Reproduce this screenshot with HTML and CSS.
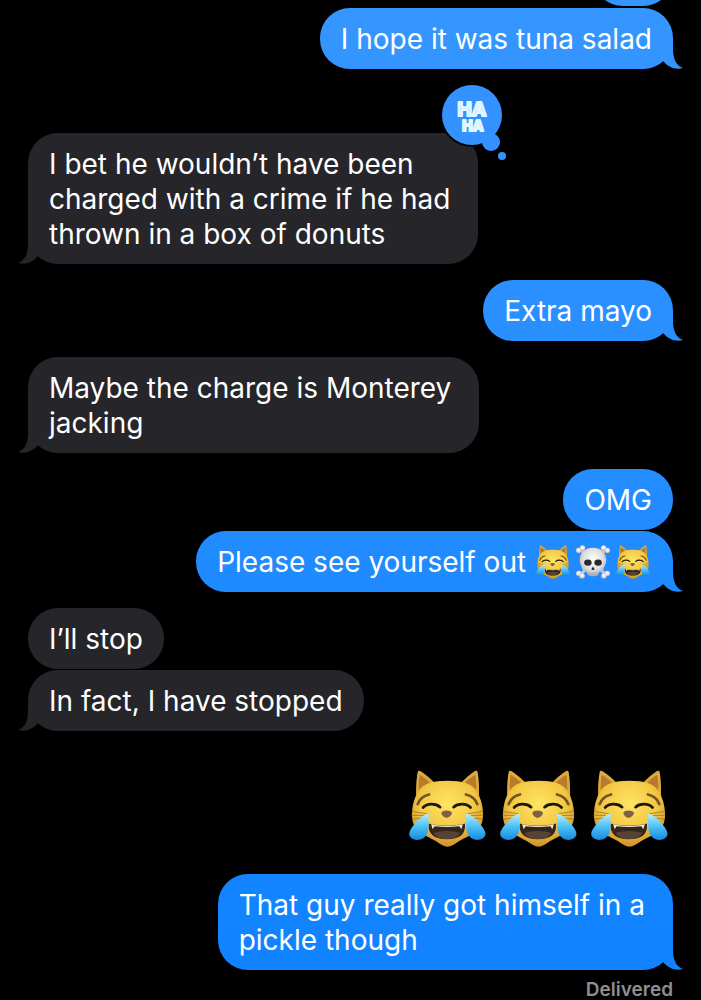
FILE: index.html
```
<!DOCTYPE html>
<html lang="en">
<head>
  <meta charset="UTF-8" />
  <meta name="viewport" content="width=device-width, initial-scale=1.0" />
  <title>Messages</title>
  <link rel="stylesheet" href="styles.css">
</head>
<body>
  <!-- emoji shapes, reused below -->
  <svg class="sprites" aria-hidden="true">
    <defs>
      <radialGradient id="fur" cx="0.5" cy="0.35" r="0.65">
        <stop offset="0" stop-color="#ffe565" />
        <stop offset="0.6" stop-color="#f3c843" />
        <stop offset="1" stop-color="#cf8f2a" />
      </radialGradient>
      <linearGradient id="tear" x1="0" y1="0" x2="0" y2="1">
        <stop offset="0" stop-color="#b9efff" />
        <stop offset="0.5" stop-color="#4cc0f5" />
        <stop offset="1" stop-color="#1689de" />
      </linearGradient>
      <radialGradient id="bone" cx="0.5" cy="0.4" r="0.6">
        <stop offset="0" stop-color="#ffffff" />
        <stop offset="0.65" stop-color="#dcdcdf" />
        <stop offset="1" stop-color="#a9a9b0" />
      </radialGradient>
      <linearGradient id="puff" x1="0" y1="0" x2="0" y2="1">
        <stop offset="0" stop-color="#ffffff" />
        <stop offset="0.5" stop-color="#bfeaff" />
        <stop offset="1" stop-color="#ffffff" />
      </linearGradient>
    </defs>

    <symbol id="cat" viewBox="30 32 230 230">
      <path d="M52 120C50 90 52 60 56 38c1-4 5-5 9-2 16 11 29 22 42 35l78 0c13-13 25-24 41-35 4-3 8-2 9 2 4 22 5 52 4 82z" fill="#deaa3b" />
      <path d="M60 104c-2-22-1-42 2-58 13 8 25 17 34 28zM230 104c2-22 1-42-2-58-13 8-25 17-34 28z" fill="#b67b2c" />
      <path d="M145 64c43 0 74 8 88 32 12 20 17 42 18 62 1 16-1 32-9 44-14 22-42 30-63 43-12 8-23 16-34 16s-22-8-34-16c-21-13-49-21-63-43-8-12-10-28-9-44 1-20 6-42 18-62 14-24 45-32 88-32z" fill="url(#fur)" />
      <g fill="none" stroke="#715522" stroke-width="8" stroke-linecap="round">
        <path d="M56 134c5-15 17-25 34-29M234 134c-5-15-17-25-34-29" />
      </g>
      <g fill="none" stroke="#20170c" stroke-width="8" stroke-linecap="round">
        <path d="M72 144c12-13 38-13 51-1M163 143c13-12 39-12 51 1" />
      </g>
      <g fill="none" stroke="#8a6425" stroke-width="2" stroke-linecap="round">
        <path d="M40 156l46 7M38 167l44 1M40 179l36-5M249 156l-46 7M251 167l-44 1M249 179l-36-5" />
      </g>
      <path d="M89 192c25 8 81 8 108 0 4 32-16 47-54 47s-58-16-54-47z" fill="#35261c" />
      <path d="M103 220c20-8 60-8 80 0-8 13-21 18-40 18s-32-5-40-18z" fill="#574334" />
      <path d="M96 194c30 6 64 6 95 0l-5 15-5-9c-25 3-50 3-75 0l-5 9z" fill="#f2ece2" />
      <path d="M127 159c3-8 27-8 31 0 2 6-9 16-16 16s-17-10-15-16z" fill="#806049" />
      <path d="M89 162c-10-1-28 15-42 31-17 19-22 33-9 43 16 10 39 4 47-15 6-16 3-35 4-59z" fill="url(#tear)" />
      <path d="M200 162c10-1 29 15 42 31 17 19 22 33 9 43-16 10-38 4-46-15-6-16-4-35-5-59z" fill="url(#tear)" />
    </symbol>

    <symbol id="skull" viewBox="0 0 100 100">
      <g stroke="#c9c9ce" stroke-width="9" stroke-linecap="round">
        <path d="M15 15L86 86M85 15L14 86" />
      </g>
      <g fill="url(#bone)">
        <circle cx="8" cy="16" r="8" /><circle cx="19" cy="9" r="8" />
        <circle cx="92" cy="16" r="8" /><circle cx="81" cy="9" r="8" />
        <circle cx="8" cy="84" r="8" /><circle cx="18" cy="91" r="8" />
        <circle cx="92" cy="84" r="8" /><circle cx="82" cy="91" r="8" />
        <path d="M50 8c26 0 39 16 39 36 0 13-6 18-7 26-1 7-11 8-14 10-2 9-7 12-18 12s-16-3-18-12c-3-2-13-3-14-10-1-8-7-13-7-26C11 24 24 8 50 8z" />
      </g>
      <ellipse cx="35" cy="52" rx="11" ry="9" fill="#29292c" />
      <ellipse cx="65" cy="52" rx="11" ry="9" fill="#29292c" />
      <path d="M50 63l5 9q-5 3-10 0z" fill="#29292c" />
      <path d="M41 80v7M47 81v8M53 81v8M59 80v7" stroke="#a0a0a6" stroke-width="2" />
    </symbol>
  </svg>

  <main class="thread">
    <div class="group sent">
      <div class="bubble cut"></div>
      <div class="bubble tail">I hope it was tuna salad</div>
    </div>

    <div class="group received reacted">
      <div class="bubble multiline tail">I bet he wouldn’t have been<br>charged with a crime if he had<br>thrown in a box of donuts
        <svg class="reaction" viewBox="0 0 66 76" role="img" aria-label="Ha ha">
          <circle cx="30" cy="30" r="32" fill="#000" />
          <g fill="#3392ff">
            <circle cx="30" cy="30" r="30" />
            <circle cx="49" cy="57" r="9" />
            <circle cx="60" cy="71" r="4" />
          </g>
          <text class="ha" x="30" y="31">HA</text>
          <text class="ha ha-small" x="31" y="46">HA</text>
        </svg>
      </div>
    </div>

    <div class="group sent">
      <div class="bubble tail">Extra mayo</div>
    </div>

    <div class="group received">
      <div class="bubble multiline tail">Maybe the charge is Monterey<br>jacking</div>
    </div>

    <div class="group sent">
      <div class="bubble">OMG</div>
      <div class="bubble tail">Please see yourself out
        <span class="emojis" role="img" aria-label="laughing cat, skull, laughing cat">
          <svg><use href="#cat" /></svg>
          <svg><use href="#skull" /></svg>
          <svg><use href="#cat" /></svg>
        </span>
      </div>
    </div>

    <div class="group received">
      <div class="bubble">I’ll stop</div>
      <div class="bubble tail">In fact, I have stopped</div>
    </div>

    <div class="big-emojis" role="img" aria-label="three laughing cats">
      <svg><use href="#cat" /></svg>
      <svg><use href="#cat" /></svg>
      <svg><use href="#cat" /></svg>
    </div>

    <div class="group sent">
      <div class="bubble multiline tail">That guy really got himself in a<br>pickle though</div>
    </div>
    <div class="status">Delivered</div>
  </main>
</body>
</html>
```

FILE: styles.css
```
* {
  box-sizing: border-box;
  margin: 0;
  padding: 0;
}

body {
  background: #000;
  color: #fff;
  font-family: Inter, 'Liberation Sans', sans-serif;
  font-size: 28px;
  line-height: 35px;
  overflow: hidden;
}

.sprites {
  position: absolute;
  width: 0;
  height: 0;
}

.thread {
  display: flex;
  flex-direction: column;
  gap: 16px;
  padding: 0 28px;
}

.group {
  display: flex;
  flex-direction: column;
  align-items: flex-start;
  gap: 1px;
}

.sent {
  align-items: flex-end;
}

.reacted {
  margin-top: 48px;
}

.bubble {
  position: relative;
  padding: 14px 21px 12px;
  border-radius: 30px;
  background: #26252a;
}

.multiline {
  padding-right: 28px;
}

.sent .bubble,
.sent .tail::after {
  background: linear-gradient(#3696ff, #0f82ff) fixed;
}

/* bottom edge of the message scrolled off the top */
.cut {
  width: 80px;
  height: 61px;
  margin-top: -55px;
  margin-bottom: 1px;
}

.tail::after {
  content: '';
  position: absolute;
  bottom: 0;
  width: 30px;
  height: 30px;
  background: #26252a;
  clip-path: path('M20 0V10C20 21 24 27 30 29C23 31 16 29 10 22L8 10Z');
}

.sent .tail::after {
  right: -10px;
}

.received .tail::after {
  left: -10px;
  transform: scaleX(-1);
}

.reaction {
  position: absolute;
  top: -48px;
  right: -30px;
  width: 66px;
  height: 76px;
  overflow: visible;
}

.ha {
  font-size: 19px;
  line-height: 1;
  font-weight: 800;
  text-anchor: middle;
  fill: url(#puff);
  stroke: #e4f8ff;
  stroke-width: 2px;
  stroke-linejoin: round;
}

.ha-small {
  font-size: 14px;
}

.emojis {
  display: inline-flex;
  gap: 6px;
  height: 34px;
  padding: 0 2px;
  vertical-align: top;
}

.emojis svg {
  width: 34px;
  height: 34px;
}

.big-emojis {
  display: flex;
  justify-content: flex-end;
  gap: 14px;
  padding: 23px 5px 11px;
}

.big-emojis svg {
  width: 77px;
  height: 77px;
}

.status {
  margin-top: -6px;
  color: #8e8e93;
  font-size: 19px;
  font-weight: 600;
  line-height: 20px;
  text-align: right;
}
```
